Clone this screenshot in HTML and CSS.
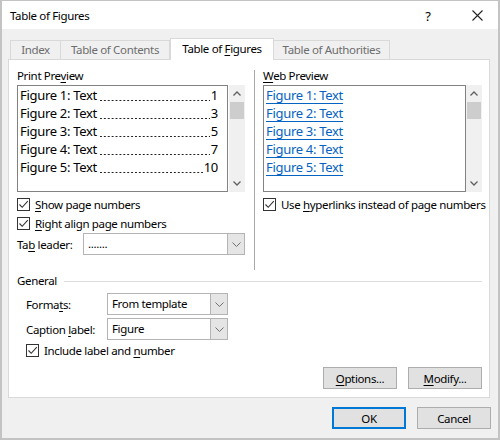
FILE: index.html
```html
<!DOCTYPE html>
<html lang="en">
<head>
  <meta charset="UTF-8" />
  <title>Table of Figures</title>
  <link rel="stylesheet" href="styles.css">
</head>
<body>

<div class="window">

  <!-- title bar -->
  <div class="titlebar">
    <div class="title">Table of Figures</div>
    <div class="help">?</div>
    <div class="close">
      <svg width="11" height="11" viewBox="0 0 11 11"><path d="M0.5 0.5 L10.5 10.5 M10.5 0.5 L0.5 10.5" stroke="#222" stroke-width="1.1" fill="none"/></svg>
    </div>
  </div>

  <div class="dlg-body">

    <!-- tabs -->
    <div class="tabs">
      <div class="tab tab-index">Index</div>
      <div class="tab tab-contents">Table of Contents</div>
      <div class="tab tab-figures active">Table of <u>F</u>igures</div>
      <div class="tab tab-authorities">Table of Authorities</div>
    </div>

    <div class="panel">

      <div class="top">
        <!-- print preview -->
        <div class="col-left">
          <div class="label">Print Pre<u>v</u>iew</div>
          <div class="listbox">
            <div class="list print-list">
              <div class="entry"><span>Figure 1: Text</span><span class="leader"></span><span>1</span></div>
              <div class="entry"><span>Figure 2: Text</span><span class="leader"></span><span>3</span></div>
              <div class="entry"><span>Figure 3: Text</span><span class="leader"></span><span>5</span></div>
              <div class="entry"><span>Figure 4: Text</span><span class="leader"></span><span>7</span></div>
              <div class="entry"><span>Figure 5: Text</span><span class="leader"></span><span>10</span></div>
            </div>
            <div class="scrollbar">
              <div class="arrow"><svg width="8" height="5" viewBox="0 0 8 5"><path d="M0.5 4.5 L4 1 L7.5 4.5" stroke="#606060" stroke-width="1.3" fill="none"/></svg></div>
              <div class="thumb"></div>
              <div class="track"></div>
              <div class="arrow"><svg width="8" height="5" viewBox="0 0 8 5"><path d="M0.5 0.5 L4 4 L7.5 0.5" stroke="#606060" stroke-width="1.3" fill="none"/></svg></div>
            </div>
          </div>

          <div class="check-row first">
            <span class="checkbox"><svg width="11" height="11" viewBox="0 0 11 11"><path d="M1.5 5.5 L4.2 8.3 L9.8 2.2" stroke="#333" stroke-width="1.1" fill="none"/></svg></span>
            <span><u>S</u>how page numbers</span>
          </div>
          <div class="check-row">
            <span class="checkbox"><svg width="11" height="11" viewBox="0 0 11 11"><path d="M1.5 5.5 L4.2 8.3 L9.8 2.2" stroke="#333" stroke-width="1.1" fill="none"/></svg></span>
            <span><u>R</u>ight align page numbers</span>
          </div>

          <div class="field-row">
            <span class="field-label leader-label">Ta<u>b</u> leader:</span>
            <div class="combo leader-combo">
              <span class="combo-text">.......</span>
              <span class="combo-btn"><svg width="9" height="5" viewBox="0 0 9 5"><path d="M0.5 0.5 L4.5 4.5 L8.5 0.5" stroke="#707070" stroke-width="1" fill="none"/></svg></span>
            </div>
          </div>
        </div>

        <div class="divider"></div>

        <!-- web preview -->
        <div class="col-right">
          <div class="label"><u>W</u>eb Preview</div>
          <div class="listbox">
            <div class="list web-list">
              <div class="entry"><a>Figure 1: Text</a></div>
              <div class="entry"><a>Figure 2: Text</a></div>
              <div class="entry"><a>Figure 3: Text</a></div>
              <div class="entry"><a>Figure 4: Text</a></div>
              <div class="entry"><a>Figure 5: Text</a></div>
            </div>
            <div class="scrollbar">
              <div class="arrow"><svg width="8" height="5" viewBox="0 0 8 5"><path d="M0.5 4.5 L4 1 L7.5 4.5" stroke="#606060" stroke-width="1.3" fill="none"/></svg></div>
              <div class="thumb"></div>
              <div class="track"></div>
              <div class="arrow"><svg width="8" height="5" viewBox="0 0 8 5"><path d="M0.5 0.5 L4 4 L7.5 0.5" stroke="#606060" stroke-width="1.3" fill="none"/></svg></div>
            </div>
          </div>
          <div class="check-row first">
            <span class="checkbox"><svg width="11" height="11" viewBox="0 0 11 11"><path d="M1.5 5.5 L4.2 8.3 L9.8 2.2" stroke="#333" stroke-width="1.1" fill="none"/></svg></span>
            <span>Use <u>h</u>yperlinks instead of page numbers</span>
          </div>
        </div>
      </div>

      <!-- general -->
      <div class="general">
        <div class="group-head">
          <span>General</span>
          <span class="group-line"></span>
        </div>
        <div class="general-body">
          <div class="field-row formats-row">
            <span class="field-label general-label">Forma<u>t</u>s:</span>
            <div class="combo general-combo">
              <span class="combo-text">From template</span>
              <span class="combo-btn"><svg width="9" height="5" viewBox="0 0 9 5"><path d="M0.5 0.5 L4.5 4.5 L8.5 0.5" stroke="#707070" stroke-width="1" fill="none"/></svg></span>
            </div>
          </div>
          <div class="field-row caption-row">
            <span class="field-label general-label">Caption <u>l</u>abel:</span>
            <div class="combo general-combo">
              <span class="combo-text">Figure</span>
              <span class="combo-btn"><svg width="9" height="5" viewBox="0 0 9 5"><path d="M0.5 0.5 L4.5 4.5 L8.5 0.5" stroke="#707070" stroke-width="1" fill="none"/></svg></span>
            </div>
          </div>
          <div class="check-row include-row">
            <span class="checkbox"><svg width="11" height="11" viewBox="0 0 11 11"><path d="M1.5 5.5 L4.2 8.3 L9.8 2.2" stroke="#333" stroke-width="1.1" fill="none"/></svg></span>
            <span>Include label and <u>n</u>umber</span>
          </div>
        </div>
      </div>

      <div class="panel-buttons">
        <button class="btn"><u>O</u>ptions...</button>
        <button class="btn"><u>M</u>odify...</button>
      </div>
    </div>

    <!-- footer -->
    <div class="footer">
      <button class="btn default">OK</button>
      <button class="btn">Cancel</button>
    </div>
  </div>
</div>

</body>
</html>
```

FILE: styles.css
```css
body {
  margin: 0;
  font-family: "Noto Sans", "Open Sans", sans-serif;
  font-size: 11.5px;
  letter-spacing: -0.35px;
  color: #000;
  background: #fff;
}

u {
  text-decoration: underline;
  text-underline-offset: 2px;
}

.window {
  width: 500px;
  height: 440px;
  box-sizing: border-box;
  border: 2px solid #c3c3c3;
  border-top-width: 1px;
  background: #f0f0f0;
  display: flex;
  flex-direction: column;
}

/* title bar */
.titlebar {
  height: 28px;
  background: #fff;
  display: flex;
  align-items: center;
  padding-top: 1px;
  box-sizing: border-box;
}

.title {
  flex: 1;
  padding-left: 8px;
}

.help {
  width: 20px;
  text-align: center;
  font-size: 13px;
  margin-right: 34px;
}

.close {
  width: 14px;
  margin-right: 12px;
  display: flex;
  align-items: center;
}

.dlg-body {
  flex: 1;
  padding: 9px 8px 0 6px;
  display: flex;
  flex-direction: column;
}

/* tabs */
.tabs {
  display: flex;
  align-items: flex-end;
  margin-left: 2px;
  height: 21px;
}

.tab {
  height: 19px;
  box-sizing: border-box;
  border: 1px solid #d9d9d9;
  border-bottom: none;
  border-left: none;
  line-height: 18px;
  text-align: center;
  color: #6d6d6d;
  background: #f0f0f0;
  white-space: nowrap;
}

.tab:first-child {
  border-left: 1px solid #d9d9d9;
}

.tab-index { width: 51px; }
.tab-contents { width: 109px; }
.tab-figures { width: 104px; }
.tab-authorities { width: 116px; }

.tab.active {
  height: 22px;
  margin-bottom: -1px;
  background: #fff;
  color: #000;
  border-left: 1px solid #d9d9d9;
  position: relative;
  z-index: 1;
  line-height: 19px;
}

.panel {
  height: 339px;
  box-sizing: border-box;
  background: #fff;
  border: 1px solid #d9d9d9;
  padding: 8px 7px 0 8px;
  display: flex;
  flex-direction: column;
}

.top {
  display: flex;
  height: 202px;
}

.col-left {
  width: 228px;
}

.col-right {
  width: 219px;
}

.divider {
  width: 1px;
  background: #a8a8a8;
  margin: 2px 8px 0 9px;
  height: 200px;
}

.label {
  height: 16px;
  line-height: 16px;
}

.listbox {
  display: flex;
  margin-top: 1px;
  height: 107px;
}

.list {
  flex: 1;
  box-sizing: border-box;
  border: 1px solid #828282;
  padding: 0 9px 0 2px;
  overflow: hidden;
}

.entry {
  height: 18px;
  line-height: 18px;
  font-size: 13px;
  letter-spacing: -0.3px;
  display: flex;
  white-space: nowrap;
}

/* dot leader between caption and page number */
.leader {
  flex: 1;
  margin: 0 1px 0 1px;
  background-image: radial-gradient(circle, #222 0.55px, transparent 0.95px);
  background-size: 3.9px 3px;
  background-repeat: repeat-x;
  background-position: 1px 12.5px;
}

.web-list a {
  color: #0563c1;
  text-decoration: underline;
  text-underline-offset: 3px;
}

.scrollbar {
  width: 16px;
  margin-left: 1px;
  background: #f0f0f0;
  display: flex;
  flex-direction: column;
}

.web-list + .scrollbar {
  margin-left: 0;
}

.arrow {
  height: 17px;
  display: flex;
  align-items: center;
  justify-content: center;
}

.thumb {
  height: 17px;
  margin: 0 1px;
  background: #cdcdcd;
}

.track {
  flex: 1;
}

/* checkboxes */
.check-row {
  height: 19px;
  display: flex;
  align-items: center;
  white-space: nowrap;
}

.check-row.first {
  margin-top: 3px;
}

.checkbox {
  width: 13px;
  height: 13px;
  box-sizing: border-box;
  border: 1px solid #333;
  background: #fff;
  margin-right: 5px;
  display: flex;
  align-items: center;
  justify-content: center;
  flex-shrink: 0;
}

/* combo boxes */
.field-row {
  display: flex;
  align-items: center;
}

.field-label {
  white-space: nowrap;
}

.leader-label {
  width: 66px;
}

.combo {
  height: 22px;
  box-sizing: border-box;
  border: 1px solid #b4b4b4;
  background: #fff;
  display: flex;
}

.leader-combo {
  width: 162px;
}

.general-combo {
  width: 121px;
}

.combo-text {
  flex: 1;
  padding-left: 4px;
  line-height: 20px;
}

.combo-btn {
  width: 16px;
  background: #e5e5e5;
  border-left: 1px solid #b4b4b4;
  display: flex;
  align-items: center;
  justify-content: center;
}

/* general group */
.general {
  margin-top: 2px;
}

.group-head {
  display: flex;
  align-items: center;
  height: 16px;
}

.group-line {
  flex: 1;
  height: 1px;
  background: #dcdcdc;
  margin-left: 7px;
  margin-top: 2px;
}

.general-body {
  padding-left: 9px;
}

.formats-row {
  margin-top: 5px;
}

.caption-row {
  margin-top: 3px;
}

.general-label {
  width: 81px;
}

.include-row {
  margin-top: 1px;
}

/* buttons */
.panel-buttons {
  display: flex;
  justify-content: flex-end;
  gap: 11px;
  margin-top: 7px;
}

.btn {
  width: 74px;
  height: 22px;
  box-sizing: border-box;
  background: #e1e1e1;
  border: 1px solid #adadad;
  font-family: inherit;
  font-size: 11.5px;
  letter-spacing: -0.35px;
  color: #000;
  padding: 0;
}

.btn.default {
  border: 2px solid #0078d7;
}

.footer {
  display: flex;
  justify-content: flex-end;
  gap: 11px;
  margin-top: 9px;
  margin-right: -1px;
}
```
